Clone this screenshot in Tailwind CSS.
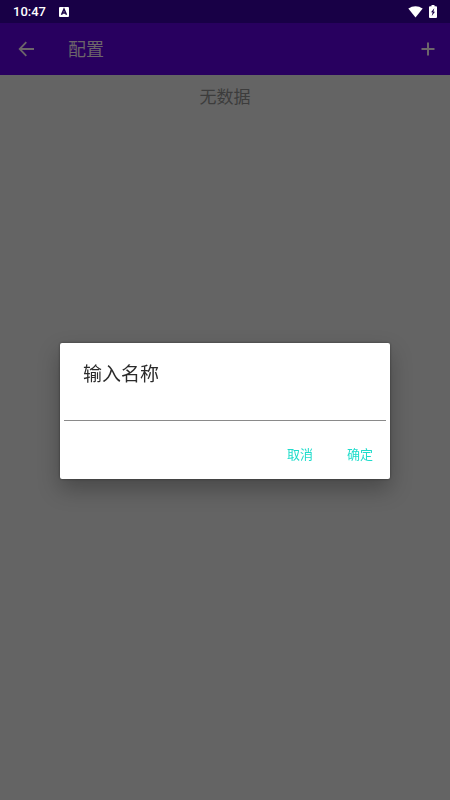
<!DOCTYPE html>
<html lang="zh-CN">
  <head>
    <meta charset="UTF-8">
    <meta name="viewport" content="width=device-width, initial-scale=1.0">
    <title>配置</title>
    <script src="https://cdn.jsdelivr.net/npm/@tailwindcss/browser@4"></script>
  </head>
  <body class="min-h-screen bg-[#646464] font-[Roboto,'Noto_Sans_CJK_SC',sans-serif]">
    <!-- status bar -->
    <div class="flex h-[23px] items-center bg-[#180046] px-[13px] text-white">
      <span class="text-[13px] leading-5 font-medium">10:47</span>
      <svg class="ml-[13px] h-[10px] w-[10px]" viewBox="0 0 10 10" aria-hidden="true">
        <rect width="10" height="10" rx="1" fill="#fff"/>
        <path d="M2.500 7.800 5 2.200l2.500 5.600M3.500 6h3" fill="none" stroke="#180046" stroke-width="1.500"/>
      </svg>
      <svg class="ml-auto h-3 w-[15px]" viewBox="0 0 15 12" fill="currentColor" aria-hidden="true">
        <path d="M7.500 11.500 0.300 2.600C4.500-.7 10.500-.7 14.700 2.600Z"/>
      </svg>
      <svg class="ml-[6px] h-[13px] w-2" viewBox="0 0 8 13" aria-hidden="true">
        <path d="M2.500 0h3v1.300H7a1 1 0 0 1 1 1V12a1 1 0 0 1-1 1H1a1 1 0 0 1-1-1V2.300a1 1 0 0 1 1-1h1.500Z" fill="#fff"/>
        <path d="M5.300 3.200 2 7.300h1.700l-1 3.700L6 6.700H4.400Z" fill="#180046"/>
      </svg>
    </div>

    <!-- app bar -->
    <header class="flex h-[52px] items-center bg-[#28005f] pl-[18px] pr-[14px] text-[#6c656a]">
      <button type="button" aria-label="返回">
        <svg class="h-4 w-4" viewBox="0 0 16 16" fill="none" stroke="currentColor" stroke-width="1.800">
          <path d="M8.300 1.200 1.700 8l6.600 6.800M1.700 8H16"/>
        </svg>
      </button>
      <h1 class="ml-[34px] pt-px text-[18px] leading-6">配置</h1>
      <button type="button" class="ml-auto" aria-label="添加">
        <svg class="h-4 w-4" viewBox="0 0 16 16" fill="none" stroke="currentColor" stroke-width="2">
          <path d="M8 1.500v13M1.500 8h13"/>
        </svg>
      </button>
    </header>

    <main class="pt-[10px] text-center text-[17px] leading-6 text-[#3c3c3c]">
      <p>无数据</p>
    </main>

    <!-- name dialog -->
    <div class="fixed inset-0 flex items-center justify-center px-[60px] pt-[22px]">
      <form class="w-full rounded-xs bg-white shadow-[0_10px_22px_rgba(0,0,0,0.28),0_0_3px_rgba(0,0,0,0.4)]" role="dialog" aria-labelledby="dialog-title">
        <h2 id="dialog-title" class="px-[23px] pt-5 text-[19px] leading-6 text-[#2b2b2b]"><label for="name">输入名称</label></h2>
        <div class="px-1">
          <input id="name" type="text" class="block h-[34px] w-full border-b border-[#8a8a8a] px-1 text-base outline-none">
        </div>
        <div class="flex justify-end gap-2 px-1 pt-4 pb-[6px] text-[13px] leading-9 text-[#1edccb]">
          <button type="button" class="px-[13px]">取消</button>
          <button type="submit" class="px-[13px]">确定</button>
        </div>
      </form>
    </div>
  </body>
</html>
